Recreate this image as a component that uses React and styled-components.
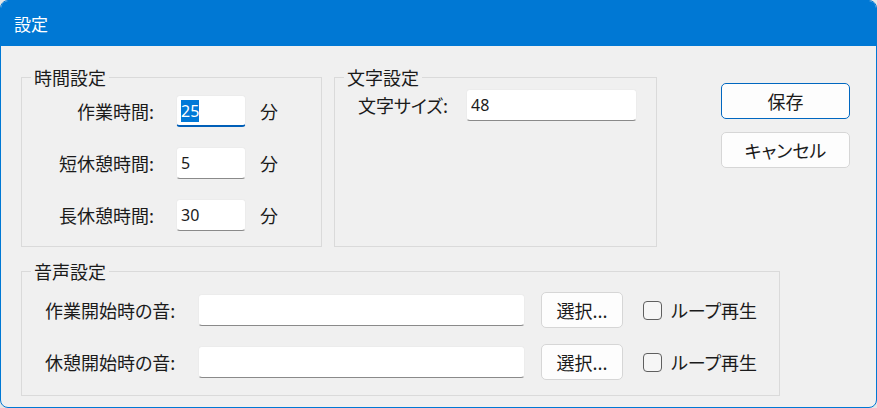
import React, { useEffect, useRef } from 'react'
import styled, { createGlobalStyle } from 'styled-components'

const GlobalStyle = createGlobalStyle`
  html, body {
    margin: 0;
    padding: 0;
    background: #e6e6e6;
  }
  body {
    font-family: "Noto Sans CJK JP", "Noto Sans", sans-serif;
    color: #1b1b1b;
    font-feature-settings: "palt";
  }
  ::selection {
    background: #0078d7;
    color: #fff;
  }
`

const Window = styled.div`
  box-sizing: border-box;
  width: 877px;
  height: 408px;
  border: 1px solid #0078d4;
  border-radius: 8px;
  overflow: hidden;
  background: #f0f0f0;
  display: flex;
  flex-direction: column;
`

const TitleBar = styled.div`
  height: 45px;
  flex: none;
  background: #0078d4;
  color: #fff;
  display: flex;
  align-items: center;
  padding-left: 13px;
  font-size: 17px;
`

const Body = styled.div`
  padding: 19px 20px 0 20px;
  display: flex;
  flex-direction: column;
  gap: 12px;
`

const TopRow = styled.div`
  display: flex;
  align-items: stretch;
`

const Group = styled.fieldset`
  box-sizing: border-box;
  margin: 0;
  min-width: 0;
  width: ${p => p.$width}px;
  margin-right: ${p => p.$gap || 0}px;
  padding: 0;
  border: 1px solid #dadada;
`

const Legend = styled.legend`
  margin-left: 9px;
  padding: 0 3px;
  font-size: 18px;
  line-height: 24px;
`

const TimeGrid = styled.div`
  display: grid;
  grid-template-columns: 154px 70px auto;
  row-gap: 20px;
  align-items: center;
  padding: 6px 0 15px 0;
`

const Label = styled.label`
  box-sizing: border-box;
  font-size: 18px;
  width: ${p => (p.$width ? `${p.$width}px` : 'auto')};
  text-align: ${p => (p.$left ? 'left' : 'right')};
  padding-right: ${p => p.$pad || 0}px;
  white-space: nowrap;
`

const Unit = styled.span`
  font-size: 18px;
  padding-left: 14px;
`

const TextInput = styled.input`
  box-sizing: border-box;
  width: ${p => p.$width}px;
  height: 32px;
  margin: 0;
  padding: 0 4px;
  background: #fff;
  border: 1px solid #ececec;
  border-bottom: ${p => (p.$focused ? '2px solid #005fb8' : '1px solid #8a8a8a')};
  border-radius: 4px;
  font-family: "Noto Sans", "Noto Sans CJK JP", sans-serif;
  font-size: 16px;
  color: #1b1b1b;
  outline: none;
  caret-color: #1b1b1b;
`

const FontRow = styled.div`
  display: flex;
  align-items: center;
  padding: 0 0 0 23px;
`

const ButtonColumn = styled.div`
  display: flex;
  flex-direction: column;
  gap: 13px;
  margin-top: 18px;
`

const Button = styled.button`
  box-sizing: border-box;
  width: ${p => p.$width}px;
  height: 36px;
  margin: 0;
  padding: 0;
  background: #fdfdfd;
  border: 1px solid ${p => (p.$primary ? '#0067c0' : '#d6d6d6')};
  border-radius: 5px;
  font-family: "Noto Sans CJK JP", "Noto Sans", sans-serif;
  font-feature-settings: "palt";
  font-size: 18px;
  color: #1b1b1b;
  cursor: default;
`

const SoundGrid = styled.div`
  display: grid;
  grid-template-columns: 153px 327px auto 1fr;
  row-gap: 16px;
  align-items: center;
  padding: 9px 0 15px 23px;
`

const PickCell = styled.div`
  padding: 0 20px 0 16px;
`

const Check = styled.label`
  display: flex;
  align-items: center;
  gap: 9px;
  font-size: 18px;
`

const Box = styled.input`
  appearance: none;
  box-sizing: border-box;
  width: 19px;
  height: 19px;
  margin: 0;
  border: 1px solid #5f5f5f;
  border-radius: 4px;
  background: #f6f6f6;
`

const SoundRow = ({ label }) => (
  <>
    <Label $left>{label}</Label>
    <TextInput $width={327} defaultValue="" />
    <PickCell>
      <Button $width={82}>選択...</Button>
    </PickCell>
    <Check>
      <Box type="checkbox" />
      ループ再生
    </Check>
  </>
)

export default function App() {
  const workRef = useRef(null)

  useEffect(() => {
    if (workRef.current) {
      workRef.current.focus()
      workRef.current.select()
    }
  }, [])

  return (
    <>
      <GlobalStyle />
      <Window>
        <TitleBar>設定</TitleBar>
        <Body>
          <TopRow>
            <Group $width={301} $gap={12}>
              <Legend>時間設定</Legend>
              <TimeGrid>
                <Label $pad={22}>作業時間:</Label>
                <TextInput ref={workRef} $width={70} $focused defaultValue="25" />
                <Unit>分</Unit>
                <Label $pad={22}>短休憩時間:</Label>
                <TextInput $width={70} defaultValue="5" />
                <Unit>分</Unit>
                <Label $pad={22}>長休憩時間:</Label>
                <TextInput $width={70} defaultValue="30" />
                <Unit>分</Unit>
              </TimeGrid>
            </Group>
            <Group $width={323} $gap={64}>
              <Legend>文字設定</Legend>
              <FontRow>
                <Label $left $width={108}>文字サイズ:</Label>
                <TextInput $width={171} defaultValue="48" />
              </FontRow>
            </Group>
            <ButtonColumn>
              <Button $width={129} $primary>保存</Button>
              <Button $width={129}>キャンセル</Button>
            </ButtonColumn>
          </TopRow>
          <Group $width={759}>
            <Legend>音声設定</Legend>
            <SoundGrid>
              <SoundRow label="作業開始時の音:" />
              <SoundRow label="休憩開始時の音:" />
            </SoundGrid>
          </Group>
        </Body>
      </Window>
    </>
  )
}
